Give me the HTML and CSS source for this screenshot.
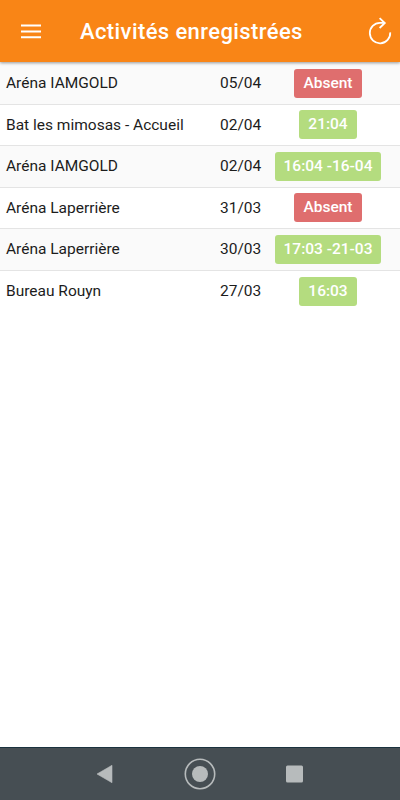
FILE: index.html
```html
<!DOCTYPE html>
<html lang="fr">
<head>
    <meta charset="UTF-8">
    <meta name="viewport" content="width=device-width, initial-scale=1.0">
    <title>Activités enregistrées</title>
    <link rel="stylesheet" href="styles.css">
</head>
<body>
    <header class="header">
        <button class="menu-btn" aria-label="Menu">
            <svg width="20" height="15" viewBox="0 0 20 15">
                <path d="M0 1.4h20M0 7.4h20M0 13.2h20" stroke="#fff" stroke-width="2"/>
            </svg>
        </button>
        <h1>Activités enregistrées</h1>
        <button class="refresh-btn" aria-label="Actualiser">
            <svg width="24" height="28" viewBox="0 0 24 28" fill="none" stroke="#fff" stroke-width="1.8">
                <path d="M22.2 15.4A10.2 10.2 0 1 1 12 5.9h4.8"/>
                <path d="M11.6 1.2l5.2 4.8-5.2 5"/>
            </svg>
        </button>
    </header>

    <main class="activities">
        <div class="row">
            <span class="place">Aréna IAMGOLD</span>
            <span class="date">05/04</span>
            <span class="status"><b class="badge absent">Absent</b></span>
        </div>
        <div class="row">
            <span class="place">Bat les mimosas - Accueil</span>
            <span class="date">02/04</span>
            <span class="status"><b class="badge">21:04</b></span>
        </div>
        <div class="row">
            <span class="place">Aréna IAMGOLD</span>
            <span class="date">02/04</span>
            <span class="status"><b class="badge">16:04 -16-04</b></span>
        </div>
        <div class="row">
            <span class="place">Aréna Laperrière</span>
            <span class="date">31/03</span>
            <span class="status"><b class="badge absent">Absent</b></span>
        </div>
        <div class="row">
            <span class="place">Aréna Laperrière</span>
            <span class="date">30/03</span>
            <span class="status"><b class="badge">17:03 -21-03</b></span>
        </div>
        <div class="row">
            <span class="place">Bureau Rouyn</span>
            <span class="date">27/03</span>
            <span class="status"><b class="badge">16:03</b></span>
        </div>
    </main>

    <!-- Barre de navigation Android -->
    <nav class="navbar">
        <svg width="32" height="32" viewBox="0 0 32 32">
            <path d="M8 16L23 7.3v17.4z" fill="#b7bbbc" stroke="#b7bbbc" stroke-linejoin="round" stroke-width=".6"/>
        </svg>
        <svg width="32" height="32" viewBox="0 0 32 32">
            <circle cx="16" cy="16" r="14.7" fill="none" stroke="#b7bbbc" stroke-width="1.6"/>
            <circle cx="16" cy="16" r="8" fill="#b7bbbc"/>
        </svg>
        <svg width="32" height="32" viewBox="0 0 32 32">
            <rect x="7" y="7.5" width="17" height="17" rx="1.5" fill="#b7bbbc"/>
        </svg>
    </nav>
</body>
</html>
```

FILE: styles.css
```css
* {
    margin: 0;
    padding: 0;
    box-sizing: border-box;
}

body {
    background: #fff;
    color: #1c1c1c;
    font-family: Roboto, sans-serif;
    height: 100vh;
    display: flex;
    flex-direction: column;
}

.header {
    height: 62px;
    background: #f98516;
    color: #fff;
    display: flex;
    align-items: center;
    padding: 0 8px 0 21px;
    box-shadow: 0 1px 3px rgba(0, 0, 0, 0.4);
    z-index: 1;
}

.header h1 {
    flex: 1;
    margin-left: 39px;
    font-size: 22px;
    font-weight: 500;
    letter-spacing: 0.4px;
}

.header svg,
.navbar svg {
    display: block;
}

button {
    background: none;
    border: none;
}

.activities {
    flex: 1;
    padding-top: 1px;
    background: linear-gradient(#fafafa 1px, #fff 1px);
}

.row {
    height: 41.5px;
    display: grid;
    grid-template-columns: 214px 42px 1fr;
    align-items: center;
    padding: 0 6px;
    font-size: 15.5px;
    border-bottom: 1px solid #e4e4e4;
}

.row:nth-child(odd) {
    background: #fafafa;
}

.row:last-child {
    background: none;
    border-bottom: none;
}

.status {
    display: flex;
    justify-content: center;
}

.badge {
    height: 29px;
    line-height: 28px;
    padding: 0 9px;
    border-radius: 3px;
    background: #b4dc7f;
    color: #fff;
    font-weight: 500;
}

.badge.absent {
    background: #df6e6e;
}

.navbar {
    height: 53px;
    background: #464e53;
    border-top: 1px solid #1b333f;
    display: flex;
    justify-content: center;
    align-items: center;
    gap: 63px;
}
```
